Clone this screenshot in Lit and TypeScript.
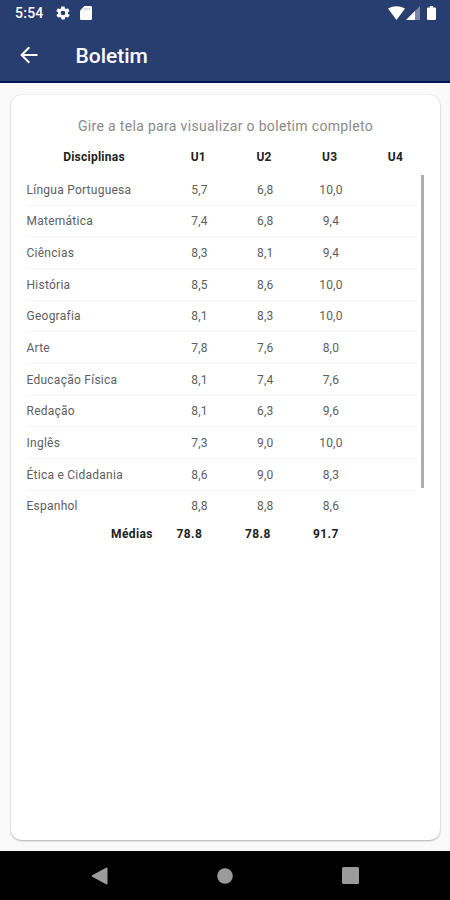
import { LitElement, html, css } from "lit";
import { customElement } from "lit/decorators.js";

const units = ["U1", "U2", "U3", "U4"];
const grades: [string, string, string, string][] = [
  ["Língua Portuguesa", "5,7", "6,8", "10,0"],
  ["Matemática", "7,4", "6,8", "9,4"],
  ["Ciências", "8,3", "8,1", "9,4"],
  ["História", "8,5", "8,6", "10,0"],
  ["Geografia", "8,1", "8,3", "10,0"],
  ["Arte", "7,8", "7,6", "8,0"],
  ["Educação Física", "8,1", "7,4", "7,6"],
  ["Redação", "8,1", "6,3", "9,6"],
  ["Inglês", "7,3", "9,0", "10,0"],
  ["Ética e Cidadania", "8,6", "9,0", "8,3"],
  ["Espanhol", "8,8", "8,8", "8,6"],
];
const averages = ["78.8", "78.8", "91.7"];

@customElement("status-bar")
export class StatusBar extends LitElement {
  static styles = css`
    :host { display: flex; align-items: center; height: 27px; padding: 0 14px 0 15px; color: #fff; }
    .time { font: 500 14px/27px Roboto, sans-serif; letter-spacing: 0.25px; width: 40px; }
    svg { display: block; fill: currentColor; margin-bottom: 1px; }
    .sd { margin-left: 9px; }
    .wifi { margin-left: auto; }
    .signal { margin-left: 1px; }
    .battery { margin-left: 7px; }
  `;
  render() {
    return html`
      <span class="time">5:54</span>
      <svg width="16" height="16" viewBox="0 0 24 24"><path d="M19.4 13c0-.3.1-.6.1-1s0-.7-.1-1l2.1-1.600c.2-.2.2-.4.1-.6l-2-3.500c-.1-.2-.4-.3-.6-.2l-2.500 1c-.5-.4-1.100-.7-1.700-1l-.4-2.600c0-.2-.2-.4-.5-.4h-4c-.2 0-.5.2-.5.4l-.4 2.600c-.6.300-1.200.6-1.700 1l-2.500-1c-.2-.1-.5 0-.6.2l-2 3.500c-.1.2-.1.5.1.6L4.600 11c0 .3-.1.7-.1 1s0 .7.100 1l-2.100 1.600c-.2.2-.2.4-.1.6l2 3.500c.1.2.4.3.6.2l2.500-1c.5.4 1.100.7 1.700 1l.4 2.600c0 .2.2.4.500.4h4c.2 0 .5-.2.500-.4l.4-2.600c.6-.3 1.200-.6 1.700-1l2.500 1c.2.1.500 0 .6-.2l2-3.500c.1-.2.1-.500-.1-.6zM12 15.500a3.500 3.500 0 1 1 0-7 3.500 3.500 0 0 1 0 7z"/></svg>
      <svg class="sd" width="12" height="14" viewBox="0 0 12 14"><path d="M4.500 0h6.200Q12 0 12 1.300v11.400q0 1.300-1.300 1.300H1.300Q0 14 0 12.700V4.500z"/><path d="M4.300 2h1.200v2.300H4.300zM6.500 2h1.200v2.300H6.500zM8.700 2h1.200v2.300H8.700z" fill="#b9c0d2"/></svg>
      <svg class="wifi" width="17" height="14" viewBox="0 0 17 14"><path d="M0 2.600Q8.500-2.200 17 2.600L8.500 14z"/></svg>
      <svg class="signal" width="14" height="14" viewBox="0 0 14 14"><path d="M14 0v14H0z" opacity=".38"/><path d="M9 5v9H0z"/></svg>
      <svg class="battery" width="9" height="14" viewBox="0 0 8 14" preserveAspectRatio="none"><path d="M2.500 0h3v1.500H7q1 0 1 1V13q0 1-1 1H1q-1 0-1-1V2.500q0-1 1-1h1.500z"/></svg>
    `;
  }
}

@customElement("grade-table")
export class GradeTable extends LitElement {
  static styles = css`
    :host { display: block; position: relative; font-family: Roboto, sans-serif; }
    .head, .row { display: grid; align-items: center; text-align: center; }
    .head { grid-template-columns: 143px repeat(4, 65.7px); height: 28px; padding-top: 1px; box-sizing: border-box; margin-left: 11.500px; font-size: 12px; font-weight: 700; color: #222; letter-spacing: 0.25px; }
    .body { margin-top: 4px; }
    .row { grid-template-columns: 140.200px repeat(4, 65.7px); height: 31.66px; margin-left: 15.500px; width: 390px; font-size: 12px; color: #5e5e5e; box-sizing: border-box; letter-spacing: 0.2px; background: linear-gradient(#f5f5f5, #f5f5f5) left bottom / 100% 1px no-repeat; }
    .row:last-child { background: none; }
    .name { text-align: left; letter-spacing: 0.25px; white-space: nowrap; }
    .thumb { position: absolute; left: 410px; top: 33px; width: 3px; height: 313px; background: #adadad; }
    .foot { display: grid; grid-template-columns: 65.500px 68.500px 68px 40px; margin: 1px 0 0 100px; font-size: 12px; line-height: 22px; font-weight: 700; color: #222; letter-spacing: 0.4px; }
  `;
  render() {
    return html`
      <div class="head"><span>Disciplinas</span>${units.map((u) => html`<span>${u}</span>`)}</div>
      <div class="body">
        ${grades.map(
          ([name, ...marks]) => html`<div class="row"><span class="name">${name}</span>${marks.map((m) => html`<span>${m}</span>`)}</div>`
        )}
      </div>
      <div class="foot"><span>Médias</span>${averages.map((a) => html`<span>${a}</span>`)}</div>
      <div class="thumb"></div>
    `;
  }
}

@customElement("app-root")
export class AppRoot extends LitElement {
  static styles = css`
    :host { display: flex; flex-direction: column; width: 450px; height: 900px; overflow: hidden; background: #fafafa; font-family: Roboto, sans-serif; }
    .top { height: 83px; box-sizing: border-box; background: #283d70; border-bottom: 2px solid #061657; color: #fff; }
    .bar { display: flex; align-items: center; height: 56px; padding-left: 20px; }
    .bar svg { display: block; }
    .title { margin: 1px 0 0 37.500px; font-size: 21px; font-weight: 500; line-height: 56px; letter-spacing: 0; }
    .page { flex: 1; padding: 12px 10px 11px 11px; display: flex; }
    .card { flex: 1; min-width: 0; background: #fff; border-radius: 10px; box-shadow: 0 1px 2px rgba(0, 0, 0, 0.28), 0 0 2px rgba(0, 0, 0, 0.1); }
    .hint { margin: 20px 0 0; height: 27px; line-height: 22px; text-align: center; font-size: 14px; color: #8a8a8a; letter-spacing: 0.33px; white-space: nowrap; }
    .nav { height: 49px; background: #000; display: flex; align-items: center; justify-content: space-between; padding: 0 91px; box-sizing: border-box; }
    .nav svg { display: block; fill: #9b9b9b; }
  `;
  render() {
    return html`
      <header class="top">
        <status-bar></status-bar>
        <div class="bar">
          <svg width="18" height="18" viewBox="0 0 18 18" fill="none" stroke="#fff" stroke-width="2"><path d="M17.500 9H2M9.300 1.300 1.600 9l7.700 7.700"/></svg>
          <h1 class="title">Boletim</h1>
        </div>
      </header>
      <main class="page">
        <section class="card">
          <p class="hint">Gire a tela para visualizar o boletim completo</p>
          <grade-table></grade-table>
        </section>
      </main>
      <nav class="nav">
        <svg width="17" height="18" viewBox="0 0 17 18"><path d="M15 .700q1.500-.7 1.500 1v14.600q0 1.700-1.500 1L1.200 9.800q-1-.8 0-1.600z"/></svg>
        <svg width="16" height="16" viewBox="0 0 16 16"><circle cx="8" cy="8" r="7.800"/></svg>
        <svg width="17" height="17" viewBox="0 0 17 17"><rect width="17" height="17" rx="1.500"/></svg>
      </nav>
    `;
  }
}
